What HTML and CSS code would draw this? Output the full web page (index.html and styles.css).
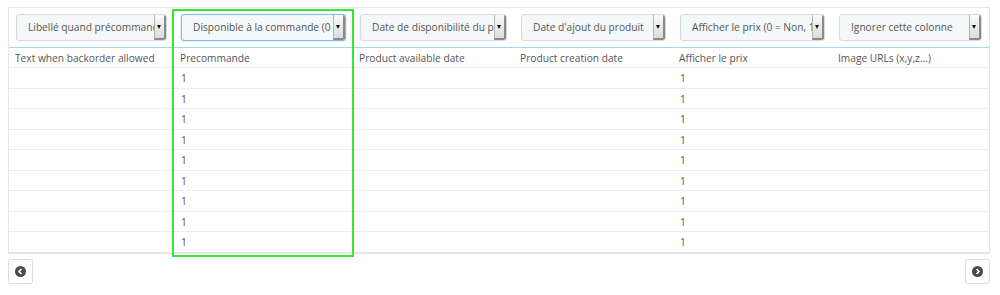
FILE: index.html
```html
<!DOCTYPE html>
<html lang="fr">
  <head>
    <meta charset="UTF-8" />
    <meta name="viewport" content="width=device-width, initial-scale=1.0" />
    <title>Import - correspondance des colonnes</title>
    <link rel="stylesheet" href="styles.css">
  </head>
  <body>
    <div class="grille">
      <div class="ligne choix">
        <div class="cell c1"><div class="select"><span>Libellé quand précommande autorisée</span><i></i></div></div>
        <div class="cell c2"><div class="select actif"><span>Disponible à la commande (0 = Refuser, 1 = Accepter)</span><i></i></div></div>
        <div class="cell c3"><div class="select"><span>Date de disponibilité du produit</span><i></i></div></div>
        <div class="cell c4"><div class="select"><span>Date d'ajout du produit</span><i></i></div></div>
        <div class="cell c5"><div class="select"><span>Afficher le prix (0 = Non, 1 = Oui)</span><i></i></div></div>
        <div class="cell c6"><div class="select"><span>Ignorer cette colonne</span><i></i></div></div>
      </div>
      <div class="ligne entete">
        <div class="cell c1">Text when backorder allowed</div>
        <div class="cell c2">Precommande</div>
        <div class="cell c3">Product available date</div>
        <div class="cell c4">Product creation date</div>
        <div class="cell c5">Afficher le prix</div>
        <div class="cell c6">Image URLs (x,y,z...)</div>
      </div>
      <div class="lignes"></div>
      <div class="surligne"></div>
    </div>
    <div class="navigation">
      <div class="bouton">
        <svg width="11" height="11" viewBox="0 0 12 12"><circle cx="6" cy="6" r="6" fill="#4a4a4a"/><path d="M7 3.3 L4.4 6 L7 8.7" fill="none" stroke="#fff" stroke-width="1.8"/></svg>
      </div>
      <div class="bouton">
        <svg width="11" height="11" viewBox="0 0 12 12"><circle cx="6" cy="6" r="6" fill="#4a4a4a"/><path d="M5 3.3 L7.6 6 L5 8.7" fill="none" stroke="#fff" stroke-width="1.8"/></svg>
      </div>
    </div>
    <script>
      const lignes = document.querySelector(".lignes");
      for (let i = 0; i < 9; i++) {
        const ligne = document.createElement("div");
        ligne.className = "ligne donnee";
        ligne.innerHTML =
          '<div class="cell c1"></div><div class="cell c2">1</div><div class="cell c3"></div>' +
          '<div class="cell c4"></div><div class="cell c5">1</div><div class="cell c6"></div>';
        lignes.appendChild(ligne);
      }
    </script>
  </body>
</html>
```

FILE: styles.css
```css
* {
  margin: 0px;
  padding: 0px;
  box-sizing: border-box;
}

body {
  margin: 7px 10px 0 8px;
  font-family: "Open Sans", "Noto Sans", sans-serif;
  font-size: 10.2px;
  color: #555;
  background-color: #fff;
}

/* Tableau des colonnes */
.grille {
  position: relative;
  width: 982px;
  border: 1px solid #e6e6e6;
  border-bottom-width: 2px;
}

.ligne {
  display: flex;
}

.cell {
  padding: 0 7px 0 6px;
  white-space: nowrap;
  overflow: hidden;
}
.c1 { width: 165px; }
.c2 { width: 179px; }
.c3 { width: 161px; }
.c4 { width: 159px; }
.c5 { width: 159px; }
.c6 { width: 157px; }

.choix {
  height: 40px;
  padding-top: 6px;
  border-bottom: 1px solid #a9d6ef;
}
.choix .cell {
  padding-left: 7px;
}

.select {
  display: flex;
  height: 27px;
  border: 1px solid #cfdde2;
  border-radius: 3px;
  background-color: #f5f8f9;
  font-size: 10.2px;
  line-height: 25px;
  color: #555;
  overflow: hidden;
}
.select span {
  flex: 1;
  padding-left: 11px;
  overflow: hidden;
  white-space: nowrap;
}
/* Flèche façon liste déroulante */
.select i {
  position: relative;
  width: 12px;
  height: 25px;
  flex-shrink: 0;
  background: linear-gradient(#fafafa, #dcdcdc);
  border-left: 1px solid #b5b5b5;
  border-right: 2px solid #8a8a8a;
  border-bottom: 2px solid #8a8a8a;
  border-radius: 0 2px 2px 0;
}
.select i::after {
  content: "";
  position: absolute;
  left: 2px;
  top: 10px;
  border-left: 2.5px solid transparent;
  border-right: 2.5px solid transparent;
  border-top: 4px solid #111;
}
.select.actif {
  border-color: #7fbbe6;
  box-shadow: 0 0 2px rgba(102, 175, 233, 0.6);
}

.entete,
.donnee {
  height: 20.45px;
  padding-top: 1px;
  line-height: 19px;
  border-bottom: 1px solid #ececec;
}
.donnee .cell {
  padding-left: 7px;
}
.donnee:last-child {
  border-bottom: none;
}

/* Colonne mise en évidence */
.surligne {
  position: absolute;
  left: 163px;
  top: 1px;
  width: 182px;
  height: 248px;
  border: 2px solid #35e835;
}

/* Boutons de défilement */
.navigation {
  display: flex;
  justify-content: space-between;
  width: 982px;
  margin-top: 5px;
}
.bouton {
  display: flex;
  align-items: center;
  justify-content: center;
  width: 25px;
  height: 25px;
  border: 1px solid #dcdcdc;
  border-radius: 3px;
  background-color: #fff;
}
```
